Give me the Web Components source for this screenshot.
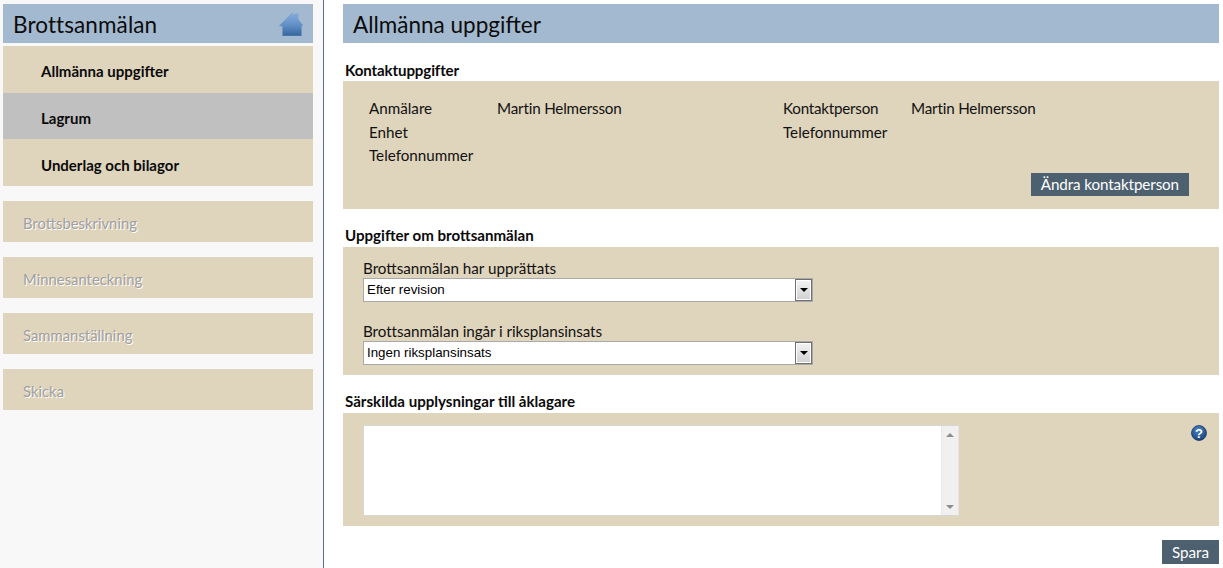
<!DOCTYPE html>
<html lang="sv"><head><meta charset="utf-8"><title>Brottsanmälan</title>
<style>
html,body{margin:0;padding:0;height:100%;background:#fff}
body{font-family:"Lato","Open Sans","Liberation Sans",sans-serif;color:#111;overflow:hidden}
</style></head><body>
<app-shell>
  <side-bar slot="side"></side-bar>
  <main-form slot="main"></main-form>
</app-shell>
<script>
const FONT='"Lato","Open Sans","Liberation Sans",sans-serif';
function def(name,css,html,init){
  customElements.define(name,class extends HTMLElement{
    constructor(){super();const r=this.attachShadow({mode:'open'});r.innerHTML='<style>'+css+'</style>'+(typeof html==='function'?html(this):html);}
    connectedCallback(){if(init)init(this)}
  });
}
def('app-shell',`:host{display:grid;grid-template-columns:324px 1fr;width:1223px;height:568px;overflow:hidden}
 .m{padding:4px 4px 0 19px;min-width:0}
 .s{min-width:0}`,`<div class="s"><slot name="side"></slot></div><div class="m"><slot name="main"></slot></div>`);

def('title-bar',`:host{display:flex;align-items:center;justify-content:space-between;box-sizing:border-box;height:39px;background:#a3b9cf;padding:2px 10px 0;font:22.5px/37px ${FONT};color:#0c0c0c}
 ::slotted(*){flex:none}`,`<slot></slot><slot name="icon"></slot>`);

def('home-icon',`:host{display:block;width:24px;height:23px;margin:0}svg{display:block}`,
`<svg width="24" height="23" viewBox="0 0 24 23"><defs><linearGradient id="g" x1="0" y1="0" x2="0" y2="1"><stop offset="0" stop-color="#86aede"/><stop offset=".55" stop-color="#5f8dc4"/><stop offset="1" stop-color="#34639c"/></linearGradient></defs>
<path d="M13 0 L16 2.6 L16 1 L19 1 L19 6 L24 12.6 L22.6 13 L22.6 23 L3.4 23 L3.4 13 L0 13 Z" fill="url(#g)" stroke="#7a9cc4" stroke-width=".5"/></svg>`);

def('nav-item',`:host{display:flex;align-items:center;box-sizing:border-box;background:#dfd4bc;font:700 15px/1 ${FONT};color:#0a0a0a;padding:5px 0 0 38px;height:46.67px}
 :host([current]){background:#c0c0c0}
 :host([off]){height:41px;padding:3px 0 0 20px;font-size:14.85px;font-weight:400;color:#a0a0a0;text-shadow:1px 1px 0 #fff}`,`<slot></slot>`);

def('side-bar',`:host{display:block;box-sizing:border-box;height:568px;background:#f8f8f8;border-right:1px solid #5a6b92;padding:4px 10px 0 3px}
 .menu{margin-top:3px;display:flex;flex-direction:column}
 .off{margin-top:15px;display:flex;flex-direction:column;gap:15px}
 .tt{letter-spacing:.1px}`,
`<title-bar><span class="tt">Brottsanmälan</span><home-icon slot="icon"></home-icon></title-bar>
 <div class="menu"><nav-item>Allmänna uppgifter</nav-item><nav-item current>Lagrum</nav-item><nav-item>Underlag och bilagor</nav-item></div>
 <div class="off"><nav-item off>Brottsbeskrivning</nav-item><nav-item off>Minnesanteckning</nav-item><nav-item off>Sammanställning</nav-item><nav-item off>Skicka</nav-item></div>`);

def('form-section',`:host{display:block}
 h2{margin:0;padding-left:2px;height:20px;font:700 15.1px/16px ${FONT};color:#0a0a0a}
 :host(.a) h2{line-height:18px;letter-spacing:-.12px}
 .p{background:#dfd4bc;box-sizing:border-box;position:relative}`,
`<h2></h2><div class="p"><slot></slot></div>`,
el=>{el.shadowRoot.querySelector('h2').textContent=el.getAttribute('heading')});

def('info-row',`:host{display:grid;grid-template-columns:128px 1fr;height:23px;font:15.2px/23px ${FONT};color:#111}
 :host(:first-child){height:24px}
 .v{letter-spacing:-.18px}`,`<span><slot name="k"></slot></span><span class="v"><slot></slot></span>`);

def('action-button',`:host{display:inline-block;box-sizing:border-box;background:#4d6070;color:#fff;font:15.2px/23px ${FONT};height:23px;padding:0 10px;white-space:nowrap;letter-spacing:-.1px}
 :host([tall]){height:24px;line-height:25px;letter-spacing:0}`,`<slot></slot>`);

def('fake-select',`:host{display:block;box-sizing:border-box;width:450px;height:24px;background:#fff;border:1px solid #a9a9a9;position:relative;font:13.33px/21px "Liberation Sans",Arial,sans-serif;color:#000;padding-left:3px}
 .b{position:absolute;right:0;top:0;width:17px;height:22px;box-sizing:border-box;border:1px solid #707070;box-shadow:inset 0 0 0 1px #fff;background:linear-gradient(#f4f4f4,#d0d0d0);display:flex;align-items:center;justify-content:center}
 .b i{display:block;width:0;height:0;border:4px solid transparent;border-top:4px solid #000;border-bottom:0}`,
`<slot></slot><div class="b"><i></i></div>`);

def('fake-textarea',`:host{display:flex;box-sizing:border-box;width:596px;height:91px;background:#fff;border:1px solid #d6d6d6;border-right-color:#e4e4e4}
 .t{flex:1}
 .sb{width:16px;background:#f0f0f0;border-left:1px solid #e8e8e8;display:flex;flex-direction:column;justify-content:space-between;align-items:center;padding:7px 0 6px}
 .u,.d{width:0;height:0;border:4px solid transparent}
 .u{border-top:0;border-bottom:4px solid #8d8d8d}.d{border-bottom:0;border-top:4px solid #8d8d8d}`,
`<div class="t"></div><div class="sb"><i class="u"></i><i class="d"></i></div>`);

def('help-icon',`:host{display:block;width:16px;height:16px}svg{display:block}text{font:700 13px "Liberation Sans",sans-serif;fill:#fff}`,
`<svg width="16" height="16" viewBox="0 0 16 16"><defs><radialGradient id="h" cx=".45" cy=".3" r=".8"><stop offset="0" stop-color="#4a86c2"/><stop offset="1" stop-color="#123a73"/></radialGradient></defs>
<circle cx="8" cy="8" r="7.5" fill="url(#h)" stroke="#0f2f5e" stroke-width=".7"/><text x="8" y="12.6" text-anchor="middle">?</text></svg>`);

def('main-form',`:host{display:block;position:relative;font:15.2px ${FONT}}
 .lab{font:15.2px/20px ${FONT};color:#111;height:20px}
 .lab.n{letter-spacing:-.05px}
 .kp{letter-spacing:-.23px}
 form-section.a{margin-top:18px}
 form-section.b{margin-top:18px}
 form-section.c{margin-top:18px}
 .contact{height:128px;box-sizing:border-box;padding:16px 0 0 26px;display:grid;grid-template-columns:414px 1fr;align-items:start;position:relative}
 .contact action-button{position:absolute;right:30px;top:92px}
 .crime{height:128px;box-sizing:border-box;padding:11px 0 0 20px}
 .crime .g2{margin-top:19px}
 .notes{height:113px;box-sizing:border-box;padding:12px 0 0 20px;position:relative}
 .notes help-icon{position:absolute;right:12px;top:12px}
 .foot{display:flex;justify-content:flex-end;margin-top:14px}`,
`<title-bar>Allmänna uppgifter</title-bar>
<form-section class="a" heading="Kontaktuppgifter"><div class="contact">
  <div><info-row><span slot="k">Anmälare</span>Martin Helmersson</info-row><info-row><span slot="k">Enhet</span></info-row><info-row><span slot="k">Telefonnummer</span></info-row></div>
  <div><info-row><span slot="k" class="kp">Kontaktperson</span>Martin Helmersson</info-row><info-row><span slot="k">Telefonnummer</span></info-row></div>
  <action-button>Ändra kontaktperson</action-button>
</div></form-section>
<form-section class="b" heading="Uppgifter om brottsanmälan"><div class="crime">
  <div class="lab">Brottsanmälan har upprättats</div><fake-select>Efter revision</fake-select>
  <div class="g2"><div class="lab n">Brottsanmälan ingår i riksplansinsats</div><fake-select>Ingen riksplansinsats</fake-select></div>
</div></form-section>
<form-section class="c" heading="Särskilda upplysningar till åklagare"><div class="notes"><fake-textarea></fake-textarea><help-icon></help-icon></div></form-section>
<div class="foot"><action-button tall>Spara</action-button></div>`);
</script>
</body></html>
